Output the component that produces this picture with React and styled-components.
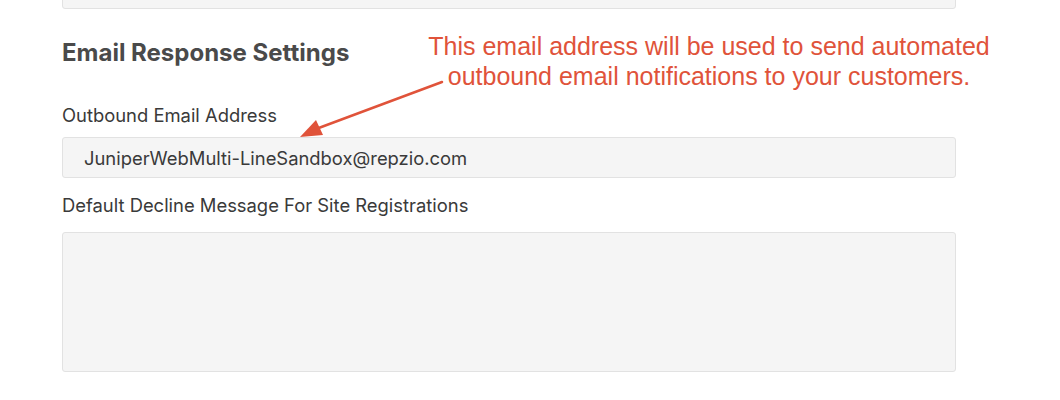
import React from "react";
import styled, { createGlobalStyle } from "styled-components";

const Global = createGlobalStyle`
  html, body {
    margin: 0;
    padding: 0;
    background: #ffffff;
    overflow: hidden;
  }
  body {
    font-family: Inter, "Liberation Sans", Arial, sans-serif;
    color: #333333;
  }
`;

const Page = styled.div`
  position: relative;
  width: 1060px;
  height: 400px;
  overflow: hidden;
  background: #ffffff;
`;

const Form = styled.div`
  display: flex;
  flex-direction: column;
  width: 894px;
  padding-left: 62px;
`;

const Field = styled.div`
  box-sizing: border-box;
  width: 100%;
  height: ${(p) => p.$height}px;
  margin-top: ${(p) => p.$gap || 0}px;
  background: #f5f5f5;
  border: 1px solid #e2e2e2;
  border-radius: 3px;
  display: flex;
  align-items: ${(p) => (p.$multi ? "flex-start" : "center")};
  padding: 0 21px;
  font-size: 18.4px;
  color: #3a3a3a;
`;

const Heading = styled.h2`
  margin: 30px 0 0;
  font-size: 24px;
  font-weight: 700;
  line-height: 28px;
  color: #4a4a4a;
`;

const Label = styled.label`
  display: block;
  margin-top: ${(p) => p.$gap}px;
  font-size: 18.4px;
  line-height: 22px;
  color: #3a3a3a;
`;

const Note = styled.div`
  position: absolute;
  left: 400px;
  top: 31px;
  width: 618px;
  text-align: center;
  font-family: "Liberation Sans", Arial, sans-serif;
  font-size: 25px;
  line-height: 30px;
  color: #e0533a;
`;

const Arrow = styled.svg`
  position: absolute;
  left: 290px;
  top: 74px;
  overflow: visible;
`;

export default function App() {
  return (
    <Page>
      <Global />
      <Form>
        <Field $height={40} $gap={-31} />
        <Heading>Email Response Settings</Heading>
        <Label $gap={37}>Outbound Email Address</Label>
        <Field $height={41} $gap={11}>
          JuniperWebMulti-LineSandbox@repzio.com
        </Field>
        <Label $gap={16}>Default Decline Message For Site Registrations</Label>
        <Field $height={140} $gap={16} $multi />
      </Form>
      <Note>
        This email address will be used to send automated
        <br />
        outbound email notifications to your customers.
      </Note>
      <Arrow width="170" height="70" viewBox="0 0 170 70">
        <line x1="152" y1="8" x2="26" y2="55" stroke="#e0533a" strokeWidth="2.5" strokeLinecap="round" />
        <polygon points="10,63 26,46 33,61" fill="#e0533a" />
      </Arrow>
    </Page>
  );
}
